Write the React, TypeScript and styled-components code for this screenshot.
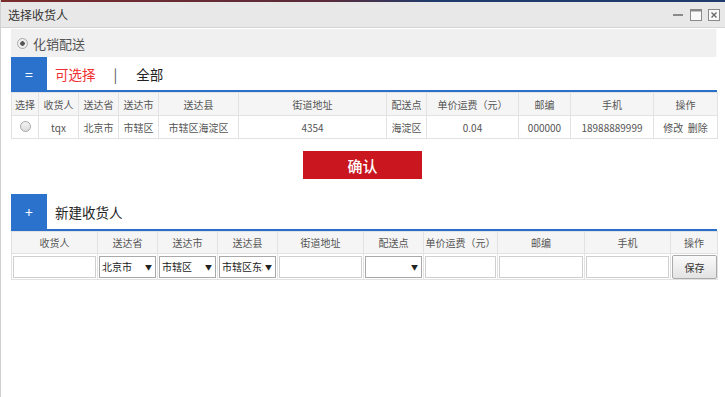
import styled, { createGlobalStyle } from "styled-components";

const GlobalStyle = createGlobalStyle`
  html, body { margin: 0; padding: 0; background: #fff; }
  body { font-family: "Noto Sans CJK SC", "Noto Sans", "Liberation Sans", sans-serif; }
`;

const Window = styled.div`
  width: 725px;
  height: 397px;
  background: #fff;
  border-left: 1px solid #d0d0d0;
  box-sizing: border-box;
  overflow: hidden;
`;

const TopStrip = styled.div`
  height: 2px;
  background: linear-gradient(90deg, #7a2c2c, #5a2a3a 45%, #1e3c6e 60%, #1e3c6e);
`;

const TitleBar = styled.div`
  height: 25px;
  background: #e8e8e8;
  border-bottom: 1px solid #d4d4d4;
  display: flex;
  align-items: center;
  justify-content: space-between;
  padding: 0 4px 0 7px;
  font-size: 12px;
  color: #333;
`;

const Controls = styled.div`
  display: flex;
  align-items: center;
  gap: 4px;
`;

const Content = styled.div`
  padding: 1px 8px 0 10px;
`;

const RadioRow = styled.div`
  height: 28px;
  background: #f0f0f0;
  border-right: 1px solid #fafafa;
  display: flex;
  align-items: center;
  gap: 5px;
  padding-left: 6px;
  font-size: 13px;
  color: #555;
`;

const Radio = styled.span<{ $checked?: boolean }>`
  width: 9px;
  height: 9px;
  border-radius: 50%;
  border: 1px solid #a8a8a8;
  background: ${(p) => (p.$checked ? "radial-gradient(circle, #555 0 2px, #eee 2.5px)" : "linear-gradient(#f4f4f4, #dcdcdc)")};
  display: inline-block;
`;

const SectionHead = styled.div<{ $top: number; $h: number }>`
  margin-top: ${(p) => p.$top}px;
  height: ${(p) => p.$h}px;
  border-bottom: 2px solid #2a6fc9;
  display: flex;
  align-items: center;
  background: #fff;
`;

const BlueBox = styled.div`
  width: 36px;
  align-self: stretch;
  background: #2a72cc;
  color: #fff;
  font-size: 14px;
  display: flex;
  align-items: center;
  justify-content: center;
`;

const Tab = styled.span<{ $active?: boolean; $ml: number }>`
  margin-left: ${(p) => p.$ml}px;
  font-size: 13.5px;
  color: ${(p) => (p.$active ? "#f03030" : "#222")};
`;

const Sep = styled.span`
  margin-left: 18px;
  font-size: 14px;
  color: #555;
`;

const Table = styled.table`
  width: 706px;
  border-collapse: collapse;
  table-layout: fixed;
  font-size: 10px;
  color: #555;
  th, td {
    border: 1px solid #e2e2e2;
    text-align: center;
    padding: 0;
    white-space: nowrap;
    overflow: hidden;
  }
  th {
    background: #f5f5f5;
    font-weight: normal;
  }
`;

const Row = styled.tr<{ $h: number }>`
  height: ${(p) => p.$h}px;
`;

const ConfirmWrap = styled.div`
  display: flex;
  justify-content: center;
  margin-top: 12px;
  padding-right: 3px;
`;

const Confirm = styled.button`
  width: 119px;
  height: 28px;
  border: none;
  background: #c9161f;
  color: #fff;
  font-family: inherit;
  font-size: 15px;
  font-weight: 500;
`;

const Input = styled.div`
  height: 22px;
  margin: 1px;
  border: 1px solid #cfcfcf;
  background: #fff;
  box-sizing: border-box;
`;

const Select = styled.div`
  height: 22px;
  margin: 1px;
  border: 1px solid #a9a9a9;
  background: #fff;
  box-sizing: border-box;
  display: flex;
  align-items: center;
  padding: 0 3px 0 2px;
  font-size: 10px;
  color: #222;
  text-align: left;
  span {
    flex: 1;
    min-width: 0;
    overflow: hidden;
    white-space: nowrap;
  }
  b {
    font-size: 7px;
    margin-left: 2px;
  }
`;

const SaveButton = styled.button`
  width: 45px;
  height: 24px;
  margin: 1px 0 0 1px;
  border: 1px solid #aaa;
  border-radius: 2px;
  background: linear-gradient(#fafafa, #e3e3e3);
  font-family: inherit;
  font-size: 10px;
  color: #333;
  padding: 0;
  display: block;
`;

const cols1 = [27, 40, 40, 40, 80, 148, 40, 92, 52, 83, 64];
const heads1 = ["选择", "收货人", "送达省", "送达市", "送达县", "街道地址", "配送点", "单价运费（元）", "邮编", "手机", "操作"];
const data1 = ["tqx", "北京市", "市辖区", "市辖区海淀区", "4354", "海淀区", "0.04", "000000", "18988889999"];

const cols2 = [86, 60, 60, 60, 86, 60, 74, 87, 86, 47];
const heads2 = ["收货人", "送达省", "送达市", "送达县", "街道地址", "配送点", "单价运费（元）", "邮编", "手机", "操作"];

const WinControls = () => (
  <Controls>
    <svg width="14" height="14" viewBox="0 0 14 14">
      <rect x="2" y="6" width="10" height="2" fill="#8a8a8a" />
    </svg>
    <svg width="14" height="14" viewBox="0 0 14 14">
      <rect x="1.5" y="1.5" width="11" height="11" fill="#fafafa" stroke="#8a8a8a" />
      <rect x="1.5" y="1.5" width="11" height="2" fill="#8a8a8a" />
    </svg>
    <svg width="14" height="14" viewBox="0 0 14 14">
      <rect x="1.5" y="1.5" width="11" height="11" fill="#fafafa" stroke="#8a8a8a" />
      <path d="M4.5 4.5 L9.5 9.5 M9.5 4.5 L4.5 9.5" stroke="#666" strokeWidth="1.3" />
    </svg>
  </Controls>
);

const App = () => {
  return (
    <Window>
      <GlobalStyle />
      <TopStrip />
      <TitleBar>
        <span>选择收货人</span>
        <WinControls />
      </TitleBar>
      <Content>
        <RadioRow>
          <Radio $checked />
          <span>化销配送</span>
        </RadioRow>
        <SectionHead $top={0} $h={33}>
          <BlueBox>=</BlueBox>
          <Tab $active $ml={8}>可选择</Tab>
          <Sep>|</Sep>
          <Tab $ml={19}>全部</Tab>
        </SectionHead>
        <Table>
          <colgroup>
            {cols1.map((w, i) => (
              <col key={i} style={{ width: w }} />
            ))}
          </colgroup>
          <thead>
            <Row $h={23}>
              {heads1.map((h) => (
                <th key={h}>{h}</th>
              ))}
            </Row>
          </thead>
          <tbody>
            <Row $h={23}>
              <td>
                <Radio />
              </td>
              {data1.map((d, i) => (
                <td key={i}>{d}</td>
              ))}
              <td>修改&nbsp;&nbsp;删除</td>
            </Row>
          </tbody>
        </Table>
        <ConfirmWrap>
          <Confirm>确认</Confirm>
        </ConfirmWrap>
        <SectionHead $top={15} $h={35}>
          <BlueBox>+</BlueBox>
          <Tab $ml={8}>新建收货人</Tab>
        </SectionHead>
        <Table>
          <colgroup>
            {cols2.map((w, i) => (
              <col key={i} style={{ width: w }} />
            ))}
          </colgroup>
          <thead>
            <Row $h={22}>
              {heads2.map((h) => (
                <th key={h}>{h}</th>
              ))}
            </Row>
          </thead>
          <tbody>
            <Row $h={25}>
              <td><Input /></td>
              <td><Select><span>北京市</span><b>▼</b></Select></td>
              <td><Select><span>市辖区</span><b>▼</b></Select></td>
              <td><Select><span>市辖区东城区</span><b>▼</b></Select></td>
              <td><Input /></td>
              <td><Select><span></span><b>▼</b></Select></td>
              <td><Input /></td>
              <td><Input /></td>
              <td><Input /></td>
              <td><SaveButton>保存</SaveButton></td>
            </Row>
          </tbody>
        </Table>
      </Content>
    </Window>
  );
};

export default App;
